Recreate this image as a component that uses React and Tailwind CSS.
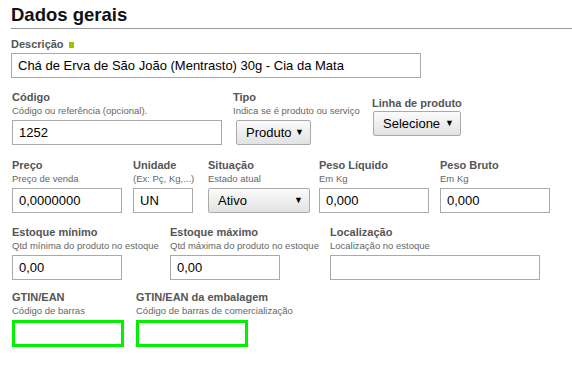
import React from 'react';

const Label = ({ children, className = '' }) => (
  <div className={`text-[11px] font-bold leading-[13px] text-[#555] whitespace-nowrap ${className}`}>{children}</div>
);

const Hint = ({ children }) => (
  <div className="mt-px h-3 text-[9.5px] leading-3 text-[#666] whitespace-nowrap">{children}</div>
);

const TextInput = ({ value = '', width, green = false }) => (
  <div
    className={`flex items-center px-[6px] text-[13px] text-black bg-white ${width} ${
      green ? 'h-[27px] border-[3px] border-[#00f000]' : 'h-[25px] border border-[#a9a9a9]'
    }`}
  >
    {value}
  </div>
);

const Select = ({ value, width, height = 'h-[25px]' }) => (
  <div
    className={`flex items-center justify-between pl-[9px] pr-[6px] text-[13px] text-black border border-[#aaa] rounded-[2px] bg-gradient-to-b from-[#fbfbfb] to-[#e2e2e2] ${width} ${height}`}
  >
    <span>{value}</span>
    <span className="text-[9px] leading-none">▼</span>
  </div>
);

const Field = ({ label, hint, children, className = '' }) => (
  <div className={`shrink-0 ${className}`}>
    <Label>{label}</Label>
    <Hint>{hint}</Hint>
    <div className="mt-[3px]">{children}</div>
  </div>
);

export default function App() {
  return (
    <div className="w-[572px] h-[371px] bg-white overflow-hidden" style={{ fontFamily: '"Liberation Sans", Arial, sans-serif' }}>
      {/* Cabeçalho */}
      <div className="ml-[11px] pt-[4px] border-b border-[#999] pb-[3px]">
        <h2 className="text-[18.5px] font-bold leading-[21px] text-[#111]">Dados gerais</h2>
      </div>

      {/* Descrição */}
      <div className="ml-[11px] mt-[9px]">
        <div className="flex items-center gap-[5px]">
          <Label>Descrição</Label>
          <span className="inline-block w-[5px] h-[6px] bg-[#99c400]"></span>
        </div>
        <div className="mt-[2px]">
          <TextInput value="Chá de Erva de São João (Mentrasto) 30g - Cia da Mata" width="w-[410px]" />
        </div>
      </div>

      {/* Código / Tipo / Linha */}
      <div className="flex ml-[12px] mt-[13px]">
        <Field label="Código" hint="Código ou referência (opcional)." className="w-[221px]">
          <TextInput value="1252" width="w-[210px]" />
        </Field>
        <Field label="Tipo" hint="Indica se é produto ou serviço" className="w-[139px]">
          <div className="ml-[3px]">
            <Select value="Produto" width="w-[75px]" />
          </div>
        </Field>
        <div className="shrink-0 mt-[6px]">
          <Label>Linha de produto</Label>
          <div className="mt-px ml-px">
            <Select value="Selecione" width="w-[88px]" />
          </div>
        </div>
      </div>

      {/* Preço / Unidade / Situação / Pesos */}
      <div className="flex ml-[12px] mt-[14px]">
        <Field label="Preço" hint="Preço de venda" className="w-[121px]">
          <TextInput value="0,0000000" width="w-[110px]" />
        </Field>
        <Field label="Unidade" hint="(Ex: Pç, Kg,...)" className="w-[75px]">
          <TextInput value="UN" width="w-[60px]" />
        </Field>
        <Field label="Situação" hint="Estado atual" className="w-[111px]">
          <Select value="Ativo" width="w-[102px]" />
        </Field>
        <Field label="Peso Líquido" hint="Em Kg" className="w-[121px]">
          <TextInput value="0,000" width="w-[110px]" />
        </Field>
        <Field label="Peso Bruto" hint="Em Kg">
          <TextInput value="0,000" width="w-[110px]" />
        </Field>
      </div>

      {/* Estoque */}
      <div className="flex ml-[12px] mt-[13px]">
        <Field label="Estoque mínimo" hint="Qtd mínima do produto no estoque" className="w-[158px]">
          <TextInput value="0,00" width="w-[110px]" />
        </Field>
        <Field label="Estoque máximo" hint="Qtd máxima do produto no estoque" className="w-[160px]">
          <TextInput value="0,00" width="w-[110px]" />
        </Field>
        <Field label="Localização" hint="Localização no estoque">
          <TextInput width="w-[210px]" />
        </Field>
      </div>

      {/* GTIN */}
      <div className="flex ml-[12px] mt-[11px]">
        <Field label="GTIN/EAN" hint="Código de barras" className="w-[124px]">
          <TextInput width="w-[112px]" green />
        </Field>
        <Field label="GTIN/EAN da embalagem" hint="Código de barras de comercialização">
          <TextInput width="w-[112px]" green />
        </Field>
      </div>
    </div>
  );
}
